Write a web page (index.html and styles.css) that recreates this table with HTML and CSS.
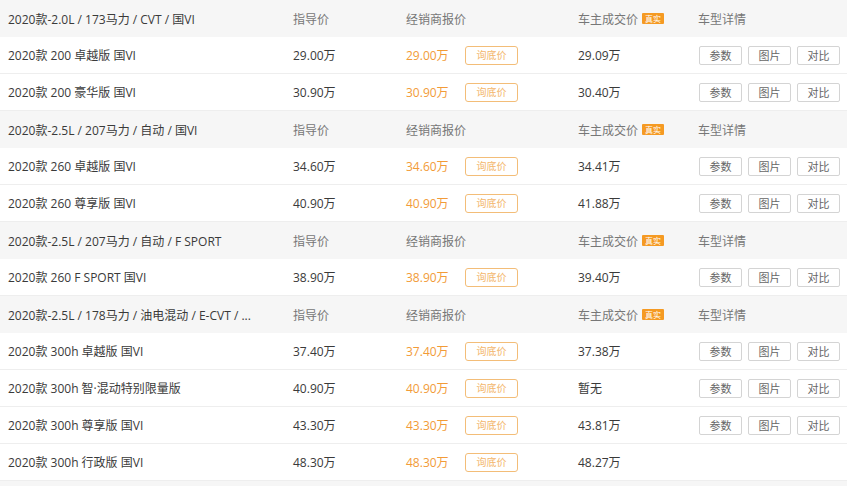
FILE: index.html
```html
<!DOCTYPE html>
<html lang="zh-CN">

<head>
    <meta charset="UTF-8">
    <meta name="viewport" content="width=device-width, initial-scale=1.0">
    <title>车型报价</title>
    <link rel="stylesheet" href="styles.css">
</head>

<body>

    <div class="spec-table">

        <div class="row group-row">
            <div class="cell name">2020款-2.0L / 173马力 / CVT / 国VI</div>
            <div class="cell label">指导价</div>
            <div class="cell label">经销商报价</div>
            <div class="cell label">车主成交价 <span class="tag">真实</span></div>
            <div class="cell label">车型详情</div>
        </div>
        <div class="row car-row">
            <div class="cell name">2020款 200 卓越版 国VI</div>
            <div class="cell">29.00万</div>
            <div class="cell"><span class="dealer-price">29.00万</span><a class="ask-btn">询底价</a></div>
            <div class="cell">29.09万</div>
            <div class="cell actions"><a class="btn">参数</a><a class="btn">图片</a><a class="btn">对比</a></div>
        </div>
        <div class="row car-row">
            <div class="cell name">2020款 200 豪华版 国VI</div>
            <div class="cell">30.90万</div>
            <div class="cell"><span class="dealer-price">30.90万</span><a class="ask-btn">询底价</a></div>
            <div class="cell">30.40万</div>
            <div class="cell actions"><a class="btn">参数</a><a class="btn">图片</a><a class="btn">对比</a></div>
        </div>

        <div class="row group-row">
            <div class="cell name">2020款-2.5L / 207马力 / 自动 / 国VI</div>
            <div class="cell label">指导价</div>
            <div class="cell label">经销商报价</div>
            <div class="cell label">车主成交价 <span class="tag">真实</span></div>
            <div class="cell label">车型详情</div>
        </div>
        <div class="row car-row">
            <div class="cell name">2020款 260 卓越版 国VI</div>
            <div class="cell">34.60万</div>
            <div class="cell"><span class="dealer-price">34.60万</span><a class="ask-btn">询底价</a></div>
            <div class="cell">34.41万</div>
            <div class="cell actions"><a class="btn">参数</a><a class="btn">图片</a><a class="btn">对比</a></div>
        </div>
        <div class="row car-row">
            <div class="cell name">2020款 260 尊享版 国VI</div>
            <div class="cell">40.90万</div>
            <div class="cell"><span class="dealer-price">40.90万</span><a class="ask-btn">询底价</a></div>
            <div class="cell">41.88万</div>
            <div class="cell actions"><a class="btn">参数</a><a class="btn">图片</a><a class="btn">对比</a></div>
        </div>

        <div class="row group-row">
            <div class="cell name">2020款-2.5L / 207马力 / 自动 / F SPORT</div>
            <div class="cell label">指导价</div>
            <div class="cell label">经销商报价</div>
            <div class="cell label">车主成交价 <span class="tag">真实</span></div>
            <div class="cell label">车型详情</div>
        </div>
        <div class="row car-row">
            <div class="cell name">2020款 260 F SPORT 国VI</div>
            <div class="cell">38.90万</div>
            <div class="cell"><span class="dealer-price">38.90万</span><a class="ask-btn">询底价</a></div>
            <div class="cell">39.40万</div>
            <div class="cell actions"><a class="btn">参数</a><a class="btn">图片</a><a class="btn">对比</a></div>
        </div>

        <div class="row group-row">
            <div class="cell name">2020款-2.5L / 178马力 / 油电混动 / E-CVT / ...</div>
            <div class="cell label">指导价</div>
            <div class="cell label">经销商报价</div>
            <div class="cell label">车主成交价 <span class="tag">真实</span></div>
            <div class="cell label">车型详情</div>
        </div>
        <div class="row car-row">
            <div class="cell name">2020款 300h 卓越版 国VI</div>
            <div class="cell">37.40万</div>
            <div class="cell"><span class="dealer-price">37.40万</span><a class="ask-btn">询底价</a></div>
            <div class="cell">37.38万</div>
            <div class="cell actions"><a class="btn">参数</a><a class="btn">图片</a><a class="btn">对比</a></div>
        </div>
        <div class="row car-row">
            <div class="cell name">2020款 300h 智·混动特别限量版</div>
            <div class="cell">40.90万</div>
            <div class="cell"><span class="dealer-price">40.90万</span><a class="ask-btn">询底价</a></div>
            <div class="cell">暂无</div>
            <div class="cell actions"><a class="btn">参数</a><a class="btn">图片</a><a class="btn">对比</a></div>
        </div>
        <div class="row car-row">
            <div class="cell name">2020款 300h 尊享版 国VI</div>
            <div class="cell">43.30万</div>
            <div class="cell"><span class="dealer-price">43.30万</span><a class="ask-btn">询底价</a></div>
            <div class="cell">43.81万</div>
            <div class="cell actions"><a class="btn">参数</a><a class="btn">图片</a><a class="btn">对比</a></div>
        </div>
        <div class="row car-row">
            <div class="cell name">2020款 300h 行政版 国VI</div>
            <div class="cell">48.30万</div>
            <div class="cell"><span class="dealer-price">48.30万</span><a class="ask-btn">询底价</a></div>
            <div class="cell">48.27万</div>
            <div class="cell actions"></div>
        </div>

        <!-- next group starts just below the fold -->
        <div class="row group-row"></div>

    </div>

</body>

</html>
```

FILE: styles.css
```css
body {
    font-family: "Open Sans", "Noto Sans CJK SC", sans-serif;
    background-color: #fff;
    color: #3a3a3a;
    margin: 0;
    padding: 0;
}

.spec-table {
    width: 847px;
    font-size: 12px;
}

.row {
    display: grid;
    grid-template-columns: 285px 113px 172px 120px 157px;
    height: 37px;
    box-sizing: border-box;
}

.group-row {
    background-color: #f6f6f6;
}

.car-row {
    border-bottom: 1px solid #eeeeee;
}

.cell {
    display: flex;
    align-items: center;
    padding-left: 8px;
    white-space: nowrap;
    overflow: hidden;
}

.label {
    color: #777;
}

.tag {
    display: inline-block;
    margin-left: 4px;
    padding: 0 3px;
    height: 11px;
    line-height: 11px;
    font-size: 8px;
    color: #fff;
    background-color: #f59a23;
    border-radius: 1px;
}

.dealer-price {
    width: 59px;
    color: #f29b38;
}

.ask-btn {
    width: 51px;
    height: 17px;
    line-height: 17px;
    border: 1px solid #f3bd78;
    border-radius: 3px;
    text-align: center;
    font-size: 10px;
    color: #f3b66b;
}

.actions {
    gap: 6px;
    padding-left: 9px;
}

.btn {
    width: 41px;
    height: 17px;
    line-height: 17px;
    border: 1px solid #d4d4d4;
    border-radius: 2px;
    text-align: center;
    font-size: 11px;
    color: #666;
}
```
